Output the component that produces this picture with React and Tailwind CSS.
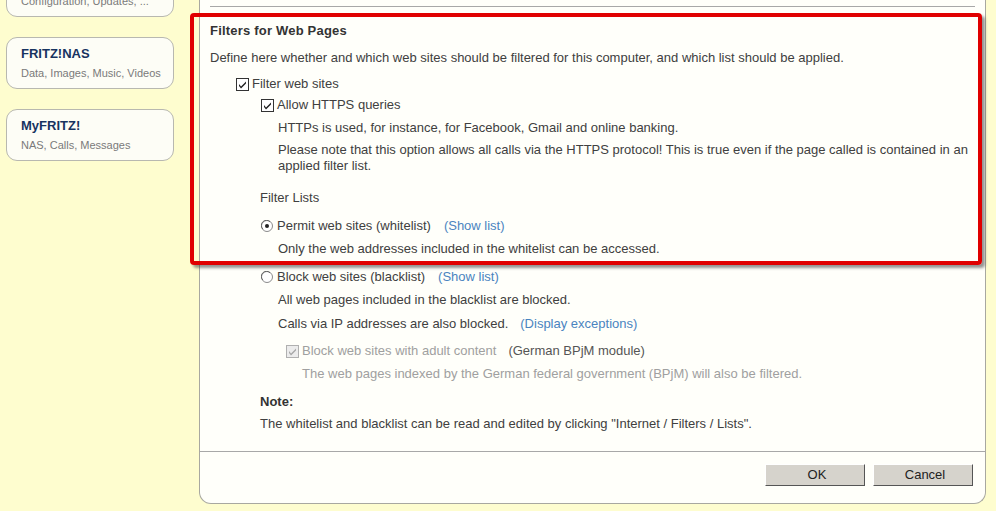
import React from "react";

const Check = ({ disabled }) => (
	<svg width="13" height="13" viewBox="0 0 13 13" className="shrink-0">
		<rect x="0.5" y="0.5" width="12" height="12" fill={disabled ? "#ececec" : "#fff"} stroke={disabled ? "#b0b0b0" : "#333"} />
		<path d="M3 6 L5 8.5 L10 3.5 L10 5.5 L5 10.5 L3 8 Z" fill={disabled ? "#a8a8a8" : "#222"} />
	</svg>
);

const Radio = ({ checked }) => (
	<svg width="12" height="12" viewBox="0 0 12 12" className="shrink-0">
		<circle cx="6" cy="6" r="5.5" fill="#fff" stroke="#8a8a8a" />
		<path d="M1.8 9 A5 5 0 0 1 9 1.8" fill="none" stroke="#666" strokeWidth="1" />
		{checked && <circle cx="6" cy="6" r="2" fill="#222" />}
	</svg>
);

const Card = ({ title, sub, className = "" }) => (
	<div className={`w-[168px] h-[52px] rounded-[11px] border border-[#b8b8b0] bg-[#fdfdf6] pl-[14px] pt-[8px] ${className}`}>
		<div className="text-[13px] font-bold text-[#17335f] leading-[16px]">{title}</div>
		<div className="text-[11px] text-[#7a7a7a] leading-[14px] mt-[4px]">{sub}</div>
	</div>
);

const Link = ({ children }) => <span className="text-[#4a84c0]">{children}</span>;

export default function App() {
	return (
		<div
			className="relative w-[996px] h-[511px] overflow-hidden bg-[#fefdcf] flex text-[13px] text-[#404040] leading-[16px]"
			style={{ fontFamily: '"Liberation Sans", Arial, sans-serif' }}
		>
			<div className="w-[199px] shrink-0 pl-[6px] flex flex-col gap-[20px] -mt-[35px]">
				<Card title="FRITZ!Box" sub="Configuration, Updates, ..." />
				<Card title="FRITZ!NAS" sub="Data, Images, Music, Videos" />
				<Card title="MyFRITZ!" sub="NAS, Calls, Messages" />
			</div>

			<div className="w-[787px] h-[504px] shrink-0 bg-[#fffffa] border-l border-r border-b border-[#a8a8a0] rounded-bl-[12px] rounded-br-[12px] flex flex-col">
				<div className="mx-[10px] mt-[6px] h-px bg-[#a8a8a8]" />
				<div className="pl-[10px] pr-[10px] flex flex-col">
					<div className="mt-[16px] font-bold text-[#333] tracking-[0.2px]">Filters for Web Pages</div>
					<div className="mt-[11px]">
						Define here whether and which web sites should be filtered for this computer, and which list should be applied.
					</div>
					<div className="mt-[10px] ml-[26px] flex items-center gap-[3px]">
						<Check />
						<span>Filter web sites</span>
					</div>
					<div className="mt-[5px] ml-[51px] flex items-center gap-[3px]">
						<Check />
						<span>Allow HTTPS queries</span>
					</div>
					<div className="mt-[7px] ml-[68px]">HTTPs is used, for instance, for Facebook, Gmail and online banking.</div>
					<div className="mt-[6px] ml-[68px]">
						Please note that this option allows all calls via the HTTPS protocol! This is true even if the page called is contained in an applied filter list.
					</div>
					<div className="mt-[16px] ml-[50px]">Filter Lists</div>
					<div className="mt-[12px] ml-[51px] flex items-center gap-[4px]">
						<Radio checked />
						<span>Permit web sites (whitelist)</span>
						<span className="ml-[9px]"><Link>(Show list)</Link></span>
					</div>
					<div className="mt-[7px] ml-[68px]">Only the web addresses included in the whitelist can be accessed.</div>
					<div className="mt-[12px] ml-[51px] flex items-center gap-[4px]">
						<Radio />
						<span>Block web sites (blacklist)</span>
						<span className="ml-[9px]"><Link>(Show list)</Link></span>
					</div>
					<div className="mt-[7px] ml-[68px]">All web pages included in the blacklist are blocked.</div>
					<div className="mt-[8px] ml-[68px]">
						Calls via IP addresses are also blocked.<span className="ml-[12px]"><Link>(Display exceptions)</Link></span>
					</div>
					<div className="mt-[11px] ml-[76px] flex items-center gap-[3px]">
						<Check disabled />
						<span className="text-[#a0a0a0]">Block web sites with adult content</span>
						<span className="ml-[9px] text-[#555]">(German BPjM module)</span>
					</div>
					<div className="mt-[7px] ml-[92px] text-[#a0a0a0]">
						The web pages indexed by the German federal government (BPjM) will also be filtered.
					</div>
					<div className="mt-[12px] ml-[50px] font-bold text-[#333]">Note:</div>
					<div className="mt-[6px] ml-[50px]">
						The whitelist and blacklist can be read and edited by clicking "Internet / Filters / Lists".
					</div>
				</div>
				<div className="mt-[19px] h-px bg-[#a8a8a8]" />
				<div className="flex justify-end gap-[8px] pr-[12px] pt-[12px]">
					<button className="w-[100px] h-[22px] bg-[#d6d3cc] border border-t-[#fff] border-l-[#fff] border-r-[#555] border-b-[#555] text-[13px] text-[#222] pl-[4px]">
						OK
					</button>
					<button className="w-[100px] h-[22px] bg-[#d6d3cc] border border-t-[#fff] border-l-[#fff] border-r-[#555] border-b-[#555] text-[13px] text-[#222] pl-[4px]">
						Cancel
					</button>
				</div>
			</div>

			<div className="absolute left-[190px] top-[13px] w-[792px] h-[252px] border-[4px] border-[#e00000] rounded-[4px] shadow-[3px_3px_3px_rgba(60,60,60,0.55)] pointer-events-none" />
		</div>
	);
}
